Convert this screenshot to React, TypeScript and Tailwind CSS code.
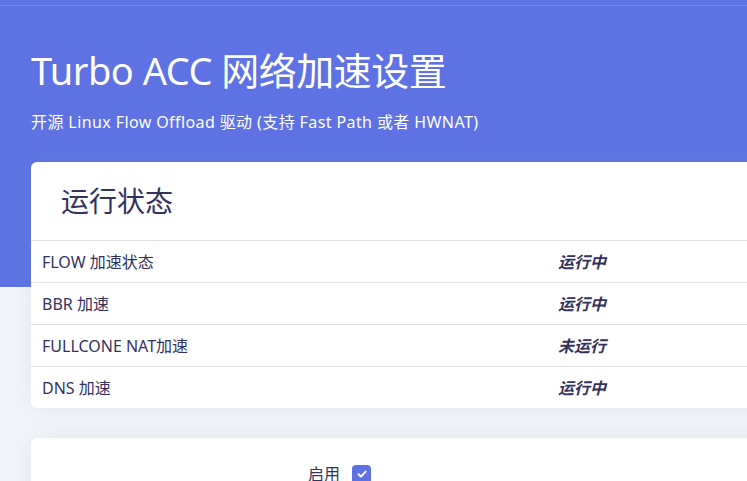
const rows = [
  { name: "FLOW 加速状态", state: "运行中" },
  { name: "BBR 加速", state: "运行中" },
  { name: "FULLCONE NAT加速", state: "未运行" },
  { name: "DNS 加速", state: "运行中" },
];

export default function App() {
  return (
    <div
      className="h-[481px] bg-[#f4f5fa] overflow-hidden text-[#32325d]"
      style={{ fontFamily: '"Noto Sans", "Noto Sans CJK SC", sans-serif' }}
    >
      {/* header band */}
      <div className="h-[287px] bg-[#5e72e4]">
        <div className="h-[5px]" />
        <div className="h-px bg-white/15" />
        <div className="pl-[31px] pt-[40px] text-white">
          <h1 className="text-[38px] leading-[48px] tracking-[-0.5px]">Turbo ACC 网络加速设置</h1>
          <p className="mt-[16px] text-[16px] leading-[24px] tracking-[0.4px]">
            开源 Linux Flow Offload 驱动 (支持 Fast Path 或者 HWNAT)
          </p>
        </div>
      </div>

      <div className="-mt-[125px] pl-[31px]">
        {/* status card */}
        <div className="w-[760px] bg-white rounded-md shadow-[0_0_24px_rgba(136,152,170,0.15)]">
          <div className="h-[78px] flex items-center pl-[30px]">
            <h2 className="text-[28px]">运行状态</h2>
          </div>
          {rows.map((r) => (
            <div key={r.name} className="h-[42px] border-t border-[#e2e2e2] flex items-center text-[16px]">
              <div className="w-[527px] pl-[11px]">{r.name}</div>
              <div className="italic font-bold">{r.state}</div>
            </div>
          ))}
        </div>

        {/* settings card */}
        <div className="mt-[30px] w-[760px] h-[80px] bg-white rounded-md shadow-[0_0_24px_rgba(136,152,170,0.15)]">
          <div className="flex items-center pt-[24px]">
            <div className="w-[309px] text-right text-[16px]">启用</div>
            <div className="ml-[12px] w-[19px] h-[19px] rounded-[4px] bg-[#5e72e4] flex items-center justify-center">
              <svg width="12" height="12" viewBox="0 0 12 12">
                <path d="M2.5 6.2 L5 8.6 L9.6 3.6" fill="none" stroke="white" strokeWidth="2" strokeLinecap="round" strokeLinejoin="round" />
              </svg>
            </div>
          </div>
        </div>
      </div>
    </div>
  );
}
